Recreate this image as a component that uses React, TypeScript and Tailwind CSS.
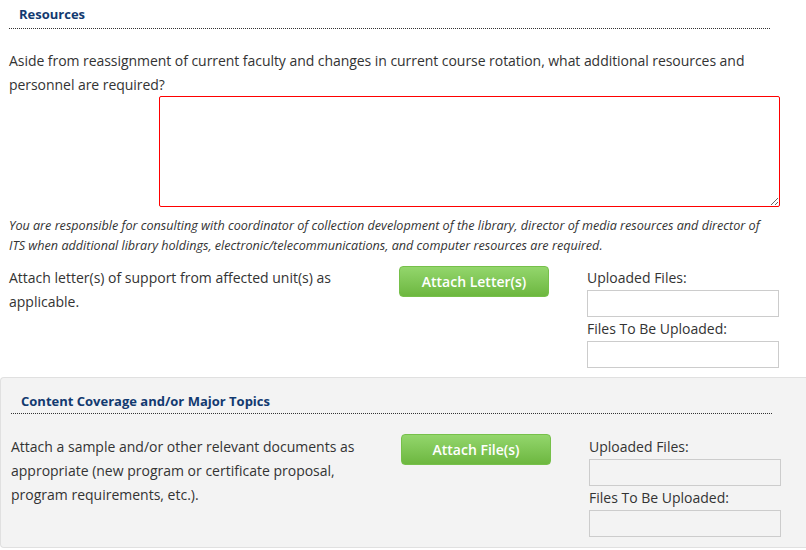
export default function App() {
    return (
        <div className="w-[806px] h-[550px] overflow-hidden bg-white text-[#333] font-['Open_Sans',sans-serif]">
            <section className="px-[9px] pt-[4px]">
                <div className="w-[761px] border-b border-dotted border-[#333] pl-[10px] pb-[4px]">
                    <h2 className="text-[13px] font-bold text-[#123a70] leading-[20px]">Resources</h2>
                </div>

                <p className="mt-[20px] text-[14px] leading-[24px] w-[770px] tracking-[-0.05px]">
                    Aside from reassignment of current faculty and changes in current course rotation, what additional resources and personnel are required?
                </p>
                <textarea className="block ml-[150px] -mt-[1px] w-[621px] h-[111px] border border-[#ff0000] rounded-[2px] outline-none" />

                <p className="mt-[9px] text-[12.6px] italic leading-[20px] w-[755px]">
                    You are responsible for consulting with coordinator of collection development of the library, director of media resources and director of ITS when additional library holdings, electronic/telecommunications, and computer resources are required.
                </p>

                <div className="flex mt-[10px]">
                    <p className="w-[340px] text-[14px] leading-[24px]">Attach letter(s) of support from affected unit(s) as applicable.</p>
                    <div className="ml-[50px] w-[188px]">
                        <button className="w-[150px] h-[31px] rounded-[4px] border border-[#76c04a] bg-gradient-to-b from-[#93d66c] to-[#6db73f] text-white text-[14px] font-semibold">Attach Letter(s)</button>
                    </div>
                    <div className="w-[192px]">
                        <div className="text-[14px] leading-[24px]">Uploaded Files:</div>
                        <div className="h-[27px] border border-[#cccccc] bg-white" />
                        <div className="text-[14px] leading-[24px]">Files To Be Uploaded:</div>
                        <div className="h-[27px] border border-[#cccccc] bg-white" />
                    </div>
                </div>
            </section>

            <section className="mt-[9px] h-[171px] border border-r-0 border-[#e0e0e0] rounded-tl-[4px] rounded-bl-[4px] bg-[#f3f3f3] px-[10px] pt-[13px]">
                <div className="w-[761px] border-b border-dotted border-[#333] pl-[10px] pb-[2px]">
                    <h2 className="text-[13px] font-bold text-[#123a70] leading-[20px]">Content Coverage and/or Major Topics</h2>
                </div>

                <div className="flex mt-[21px]">
                    <p className="w-[350px] text-[14px] leading-[24px]">Attach a sample and/or other relevant documents as appropriate (new program or certificate proposal, program requirements, etc.).</p>
                    <div className="ml-[40px] w-[188px]">
                        <button className="-mt-[1px] w-[150px] h-[31px] rounded-[4px] border border-[#76c04a] bg-gradient-to-b from-[#93d66c] to-[#6db73f] text-white text-[14px] font-semibold">Attach File(s)</button>
                    </div>
                    <div className="w-[192px]">
                        <div className="text-[14px] leading-[24px]">Uploaded Files:</div>
                        <div className="h-[27px] border border-[#cccccc]" />
                        <div className="text-[14px] leading-[24px]">Files To Be Uploaded:</div>
                        <div className="h-[27px] border border-[#cccccc]" />
                    </div>
                </div>
            </section>
        </div>
    );
}
